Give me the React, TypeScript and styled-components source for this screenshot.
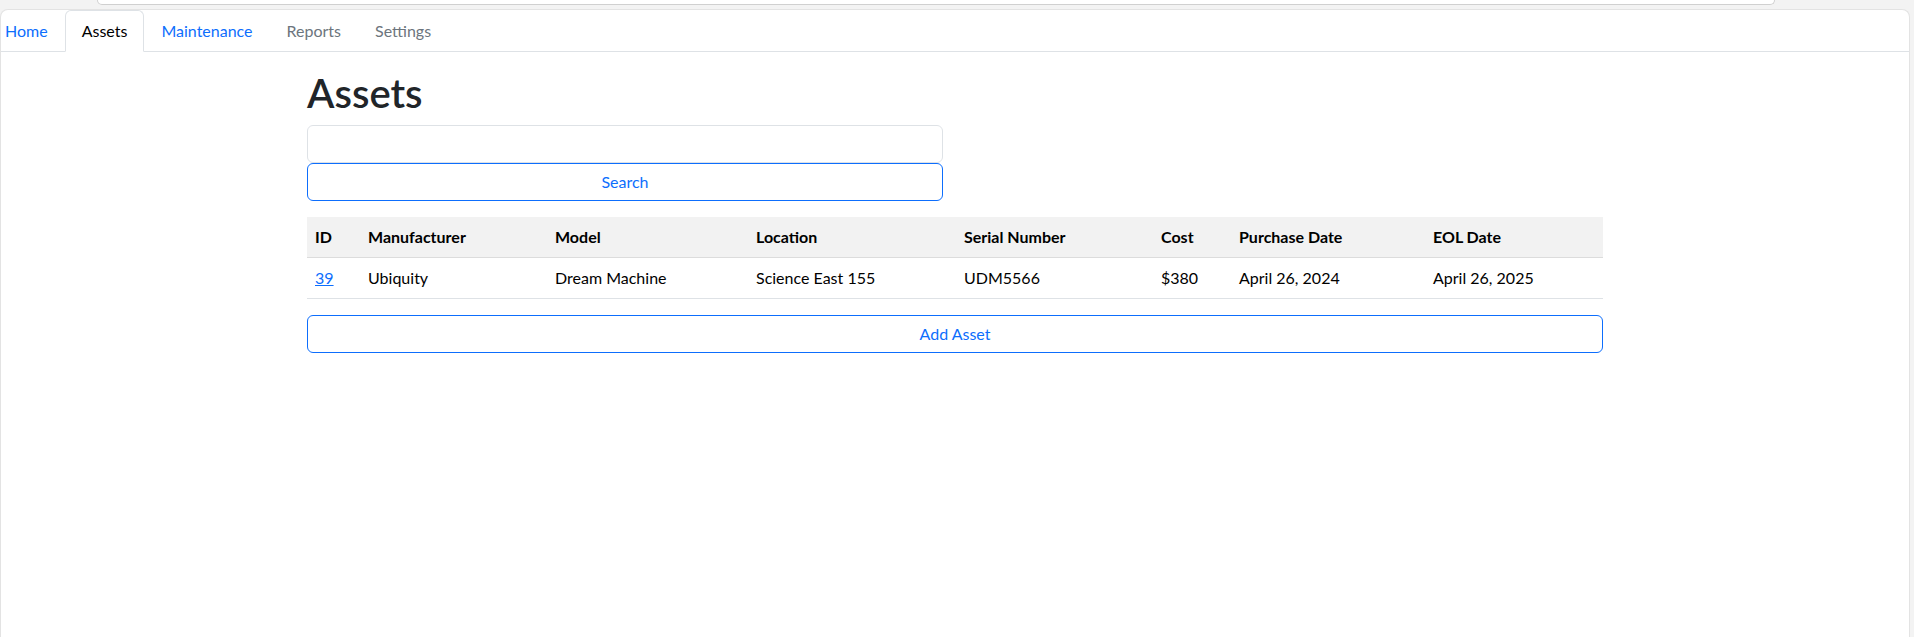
import styled, { createGlobalStyle } from 'styled-components';

const GlobalStyle = createGlobalStyle`
  html, body {
    margin: 0;
    padding: 0;
    height: 100%;
    background: #f3f3f3;
    font-family: Lato, "Liberation Sans", sans-serif;
    font-size: 16px;
    color: #212529;
  }
  #root {
    height: 100%;
    display: flex;
    flex-direction: column;
  }
`;

const TopStrip = styled.div`
  height: 9px;
  flex-shrink: 0;
`;

const AddressBar = styled.div`
  margin-left: 97px;
  width: 1678px;
  height: 5px;
  background: #ffffff;
  border: 1px solid #d0d0d0;
  border-top: none;
  border-radius: 0 0 10px 10px;
  box-sizing: border-box;
`;

const Window = styled.div`
  flex: 1;
  margin-right: 4px;
  background: #ffffff;
  border: 1px solid #e3e3e3;
  border-bottom: none;
  border-radius: 8px 8px 0 0;
  overflow: hidden;
`;

const TabNav = styled.nav`
  display: flex;
  margin-left: -13px;
  border-bottom: 1px solid #dee2e6;
`;

const TabLink = styled.a<{ $active?: boolean; $tone: 'link' | 'muted' | 'dark' }>`
  display: block;
  padding: 8px 16px;
  margin-bottom: -1px;
  line-height: 24px;
  font-size: 16px;
  text-decoration: none;
  cursor: pointer;
  border: 1px solid ${(p) => (p.$active ? '#dee2e6' : 'transparent')};
  border-bottom-color: ${(p) => (p.$active ? '#ffffff' : 'transparent')};
  border-radius: 6px 6px 0 0;
  background: ${(p) => (p.$active ? '#ffffff' : 'transparent')};
  color: ${(p) =>
    p.$tone === 'link' ? '#0d6efd' : p.$tone === 'muted' ? '#6c757d' : '#000000'};
`;

const Container = styled.main`
  width: 1296px;
  margin: 0 auto;
  padding-top: 17px;
`;

const Title = styled.h1`
  margin: 0 0 8px;
  font-size: 40px;
  line-height: 48px;
  font-weight: 600;
  color: #212529;
`;

const SearchForm = styled.form`
  width: 636px;
  display: flex;
  flex-direction: column;
  margin-bottom: 16px;
`;

const SearchInput = styled.input`
  box-sizing: border-box;
  height: 38px;
  padding: 6px 12px;
  font: inherit;
  border: 1px solid #dee2e6;
  border-radius: 6px;
  outline: none;
`;

const OutlineButton = styled.button`
  box-sizing: border-box;
  width: 100%;
  height: 38px;
  padding: 6px 12px;
  font-family: inherit;
  font-size: 16px;
  line-height: 24px;
  color: #0d6efd;
  background: #ffffff;
  border: 1px solid #0d6efd;
  border-radius: 6px;
  cursor: pointer;
`;

const Table = styled.table`
  width: 100%;
  table-layout: fixed;
  border-collapse: collapse;
  margin-bottom: 16px;
  color: #000000;
`;

const Col = styled.col<{ $width: number }>`
  width: ${(p) => p.$width}px;
`;

const HeadCell = styled.th`
  padding: 8px;
  text-align: left;
  font-weight: 700;
  line-height: 24px;
  background: #f2f2f2;
  border-bottom: 1px solid #dcdcdc;
`;

const Cell = styled.td`
  padding: 8px;
  line-height: 24px;
  border-bottom: 1px solid #dee2e6;
`;

const IdLink = styled.a`
  color: #0d6efd;
  text-decoration: underline;
  cursor: pointer;
`;

const columns = [
  { label: 'ID', width: 53 },
  { label: 'Manufacturer', width: 187 },
  { label: 'Model', width: 201 },
  { label: 'Location', width: 208 },
  { label: 'Serial Number', width: 197 },
  { label: 'Cost', width: 78 },
  { label: 'Purchase Date', width: 194 },
  { label: 'EOL Date', width: 178 },
];

const assets = [
  {
    id: 39,
    manufacturer: 'Ubiquity',
    model: 'Dream Machine',
    location: 'Science East 155',
    serial: 'UDM5566',
    cost: '$380',
    purchased: 'April 26, 2024',
    eol: 'April 26, 2025',
  },
];

export default function App() {
  return (
    <>
      <GlobalStyle />
      <TopStrip>
        <AddressBar />
      </TopStrip>
      <Window>
        <TabNav>
          <TabLink $tone="link">Home</TabLink>
          <TabLink $tone="dark" $active>
            Assets
          </TabLink>
          <TabLink $tone="link">Maintenance</TabLink>
          <TabLink $tone="muted">Reports</TabLink>
          <TabLink $tone="muted">Settings</TabLink>
        </TabNav>
        <Container>
          <Title>Assets</Title>
          <SearchForm onSubmit={(e) => e.preventDefault()}>
            <SearchInput type="text" />
            <OutlineButton type="submit">Search</OutlineButton>
          </SearchForm>
          <Table>
            <colgroup>
              {columns.map((c) => (
                <Col key={c.label} $width={c.width} />
              ))}
            </colgroup>
            <thead>
              <tr>
                {columns.map((c) => (
                  <HeadCell key={c.label}>{c.label}</HeadCell>
                ))}
              </tr>
            </thead>
            <tbody>
              {assets.map((a) => (
                <tr key={a.id}>
                  <Cell>
                    <IdLink>{a.id}</IdLink>
                  </Cell>
                  <Cell>{a.manufacturer}</Cell>
                  <Cell>{a.model}</Cell>
                  <Cell>{a.location}</Cell>
                  <Cell>{a.serial}</Cell>
                  <Cell>{a.cost}</Cell>
                  <Cell>{a.purchased}</Cell>
                  <Cell>{a.eol}</Cell>
                </tr>
              ))}
            </tbody>
          </Table>
          <OutlineButton type="button">Add Asset</OutlineButton>
        </Container>
      </Window>
    </>
  );
}
